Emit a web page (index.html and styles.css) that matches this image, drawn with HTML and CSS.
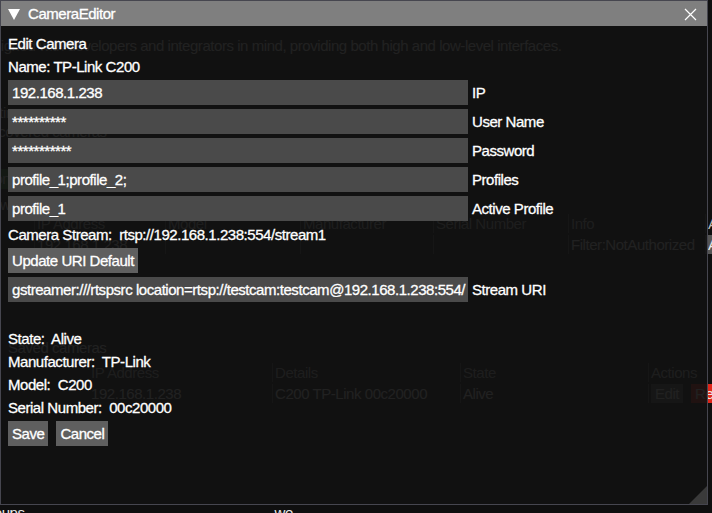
FILE: index.html
```html
<!DOCTYPE html>
<html lang="en">

<head>
    <meta charset="UTF-8">
    <title>CameraEditor</title>
    <link rel="stylesheet" href="styles.css">
</head>

<body>
    <!-- page behind the dialog -->
    <div class="page">
        <p class="line top-line">is a modular cross-platform multimedia engine that provides the core building blocks for apps, it</p>
        <p class="line">designed with developers and integrators in mind, providing both high and low-level interfaces.</p>
        <p class="line gap">Select one of the subject groups on the left to view available solutions:</p>
        <p class="line">Settings</p>
        <p class="line">Discovered cameras</p>
        <div class="green-btn">Connect</div>
        <p class="line heading">Network Cameras:</p>

        <div class="grid cams">
            <span class="th">#</span>
            <span class="th">IP Address</span>
            <span class="th">Model</span>
            <span class="th">Manufacturer</span>
            <span class="th">Serial Number</span>
            <span class="th">Info</span>
            <span class="th">Actions</span>
            <span>02</span>
            <span>192.168.1.238</span>
            <span></span>
            <span></span>
            <span></span>
            <span>Filter:NotAuthorized</span>
            <span class="bg-btn">Add</span>
        </div>

        <p class="line gap2">Saved cameras</p>

        <div class="grid saved">
            <span class="th">IP Address</span>
            <span class="th">Details</span>
            <span class="th">State</span>
            <span class="th">Actions</span>
            <span>192.168.1.238</span>
            <span>C200 TP-Link 00c20000</span>
            <span>Alive</span>
            <span class="acts"><span class="bg-btn">Edit</span><span class="red-btn">Remove</span></span>
        </div>

        <p class="line bottom-line"><span>Groups</span><span class="we">we</span></p>
    </div>

    <!-- dialog -->
    <div class="window">
        <div class="title-bar">
            <svg class="arrow" width="12" height="11" viewBox="0 0 12 11">
                <polygon points="0,0 12,0 6,11" fill="#fff" />
            </svg>
            <span class="title">CameraEditor</span>
            <svg class="close" width="13" height="13" viewBox="0 0 13 13">
                <path d="M1 1 L12 12 M12 1 L1 12" stroke="#fff" stroke-width="1.2" fill="none" />
            </svg>
        </div>

        <div class="content">
            <div class="text-row">Edit Camera</div>
            <div class="text-row">Name: TP-Link C200</div>

            <div class="field-row">
                <div class="input">192.168.1.238</div>
                <span class="label">IP</span>
            </div>
            <div class="field-row">
                <div class="input">**********</div>
                <span class="label">User Name</span>
            </div>
            <div class="field-row">
                <div class="input">***********</div>
                <span class="label">Password</span>
            </div>
            <div class="field-row">
                <div class="input">profile_1;profile_2;</div>
                <span class="label">Profiles</span>
            </div>
            <div class="field-row">
                <div class="input">profile_1</div>
                <span class="label">Active Profile</span>
            </div>

            <div class="text-row">Camera Stream:  rtsp://192.168.1.238:554/stream1</div>
            <div class="btn-row">
                <span class="btn">Update URI Default</span>
            </div>
            <div class="field-row">
                <div class="input">gstreamer:///rtspsrc location=rtsp://testcam:testcam@192.168.1.238:554/</div>
                <span class="label">Stream URI</span>
            </div>

            <div class="text-row"></div>
            <div class="text-row">State:  Alive</div>
            <div class="text-row">Manufacturer:  TP-Link</div>
            <div class="text-row">Model:  C200</div>
            <div class="text-row">Serial Number:  00c20000</div>

            <div class="btn-row">
                <span class="btn">Save</span>
                <span class="btn">Cancel</span>
            </div>
        </div>

        <div class="grip"></div>
    </div>
</body>

</html>
```

FILE: styles.css
```css
body {
    margin: 0;
    padding: 0;
    width: 712px;
    height: 513px;
    overflow: hidden;
    position: relative;
    background-color: #0f0f0f;
    color: #fff;
    font-family: "Liberation Sans", Arial, sans-serif;
    font-size: 15px;
    letter-spacing: -0.45px;
}

/* background page */
.page {
    margin-left: -22px;
    width: 760px;
    color: #e8e8e8;
}

.line {
    margin: 0;
    height: 19px;
    line-height: 19px;
    white-space: nowrap;
}

.top-line {
    margin-top: 8px;
    padding-left: 60px;
    height: 28px;
}

.gap {
    margin-top: 29px;
    padding-left: 40px;
}

.heading {
    margin-top: 6px;
}

.green-btn {
    display: inline-block;
    margin-top: 28px;
    padding: 0 6px;
    height: 20px;
    line-height: 20px;
    background-color: #2c6e2c;
}

.grid {
    display: grid;
    row-gap: 2px;
    white-space: nowrap;
}

.grid > span {
    height: 19px;
    line-height: 19px;
    overflow: hidden;
    border-left: 1px solid #555;
    padding-left: 2px;
}

.cams {
    grid-template-columns: 56px 131px 135px 133px 135px 137px 60px;
}

.gap2 {
    margin-top: 84px;
    padding-left: 30px;
}

.saved {
    margin-top: 6px;
    grid-template-columns: 294px 188px 188px 120px;
}

.saved > span:first-child,
.saved > span:nth-child(5) {
    padding-left: 112px;
}

.th {
    color: #bbb;
}

.bg-btn {
    background-color: #555;
    padding: 0 4px;
}

.acts {
    display: flex;
    gap: 8px;
}

.red-btn {
    background-color: #e0261a;
    padding: 0 4px;
}

.bottom-line {
    margin-top: 100px;
    display: flex;
    gap: 250px;
}

/* dialog */
.window {
    position: absolute;
    left: 0;
    top: 0;
    width: 708px;
    height: 505px;
    box-sizing: border-box;
    border: 1px solid #46464f;
    background-color: rgba(17, 17, 17, 0.93);
    -webkit-text-stroke: 0.3px #fff;
}

.title-bar {
    height: 25px;
    background-color: #7f7f7f;
    display: flex;
    align-items: center;
    padding: 0 7px;
    gap: 8px;
}

.title {
    flex: 1;
    line-height: 25px;
}

.arrow {
    margin-top: 1px;
}

.close {
    margin-right: 3px;
    margin-top: 1px;
}

.content {
    padding: 8px 7px;
    display: flex;
    flex-direction: column;
    gap: 4px;
}

.text-row {
    height: 19px;
    line-height: 19px;
    white-space: pre;
}

.field-row {
    display: flex;
    gap: 4px;
    height: 25px;
    line-height: 25px;
}

.input {
    width: 452px;
    padding: 0 4px;
    background-color: #4a4a4a;
    white-space: pre;
    overflow: hidden;
}

.label {
    white-space: nowrap;
}

.btn-row {
    display: flex;
    gap: 8px;
    height: 25px;
    line-height: 25px;
}

.btn {
    padding: 0 4px;
    background-color: #5f5f5f;
}

.grip {
    position: absolute;
    right: 0;
    bottom: 0;
    width: 0;
    height: 0;
    border-left: 18px solid transparent;
    border-bottom: 18px solid #3a3a3a;
}
```
